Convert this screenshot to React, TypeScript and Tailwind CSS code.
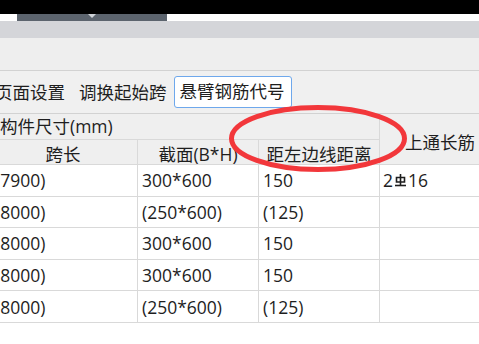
import React from 'react';

const FONT = { fontFamily: '"Open Sans", "Noto Sans CJK SC", sans-serif' };

const RebarMark: React.FC = () => (
  <svg width="13" height="15" viewBox="0 0 13 15" fill="none" stroke="currentColor" strokeWidth="1.6" className="mx-[1px]">
    <path d="M6.5 1v11" />
    <path d="M2.5 4.5h8v4.5h-8z" />
    <path d="M1 12.5h11" />
  </svg>
);

const rows: [string, string, string, React.ReactNode][] = [
  ['(7900)', '300*600', '150', (<span className="flex items-center">2<RebarMark />16</span>)],
  ['(8000)', '(250*600)', '(125)', ''],
  ['(8000)', '300*600', '150', ''],
  ['(8000)', '300*600', '150', ''],
  ['(8000)', '(250*600)', '(125)', ''],
];

const cell = 'border-r border-b border-[#d9d9d9] flex items-center';

export default function App() {
  return (
    <div className="relative w-[479px] h-[344px] overflow-hidden bg-white text-[#1e1e1e] text-[17.5px]" style={FONT}>
      <div className="h-[14px] bg-black" />
      <div className="h-[7px] bg-white">
        <div className="ml-[17px] w-[150px] h-full bg-[#5c646e] flex justify-center">
          <div className="w-0 h-0 border-l-[4px] border-r-[4px] border-t-[4px] border-l-transparent border-r-transparent border-t-[#cfd3d8]" />
        </div>
      </div>
      <div className="h-[17px] bg-[#d4d5d9]" />
      <div className="h-[33px] bg-[#eeeeee] border-b border-[#d2d2d2]" />

      <div className="h-[43px] bg-[#f0f0f0] border-b border-[#d2d2d2] flex items-center -ml-[6px]">
        <span className="px-[1px]">页面设置</span>
        <span className="ml-[13px]">调换起始跨</span>
        <button className="ml-[7px] h-[32px] px-[5px] w-[118px] bg-white border border-[#6ea8ec] rounded-[3px] leading-none text-left">
          悬臂钢筋代号
        </button>
      </div>

      <div className="-ml-[11px] grid grid-cols-[149px_121px_121px_121px] grid-rows-[26px_25px_repeat(5,31.6px)]">
        <div className={`${cell} col-span-3 bg-[#efefef] pl-[11px]`}>构件尺寸(mm)</div>
        <div className={`${cell} row-span-2 bg-[#efefef] justify-center pt-[6px]`}>上通长筋</div>
        <div className={`${cell} bg-[#efefef] justify-center pt-[4px]`}>跨长</div>
        <div className={`${cell} bg-[#efefef] justify-center pt-[4px]`}>截面(B*H)</div>
        <div className={`${cell} bg-[#efefef] justify-center pt-[4px]`}>距左边线距离</div>
        {rows.map((r, i) => (
          <React.Fragment key={i}>
            <div className={`${cell} pl-[6px]`}>{r[0]}</div>
            <div className={`${cell} pl-[4px]`}>{r[1]}</div>
            <div className={`${cell} pl-[4px]`}>{r[2]}</div>
            <div className={`${cell} pl-[3px]`}>{r[3]}</div>
          </React.Fragment>
        ))}
      </div>

      <svg className="absolute left-[229px] top-[105px]" width="178" height="67" viewBox="0 0 178 67" fill="none">
        <ellipse cx="89" cy="33.5" rx="86.5" ry="31" stroke="#f2373b" strokeWidth="5" />
      </svg>
    </div>
  );
}
